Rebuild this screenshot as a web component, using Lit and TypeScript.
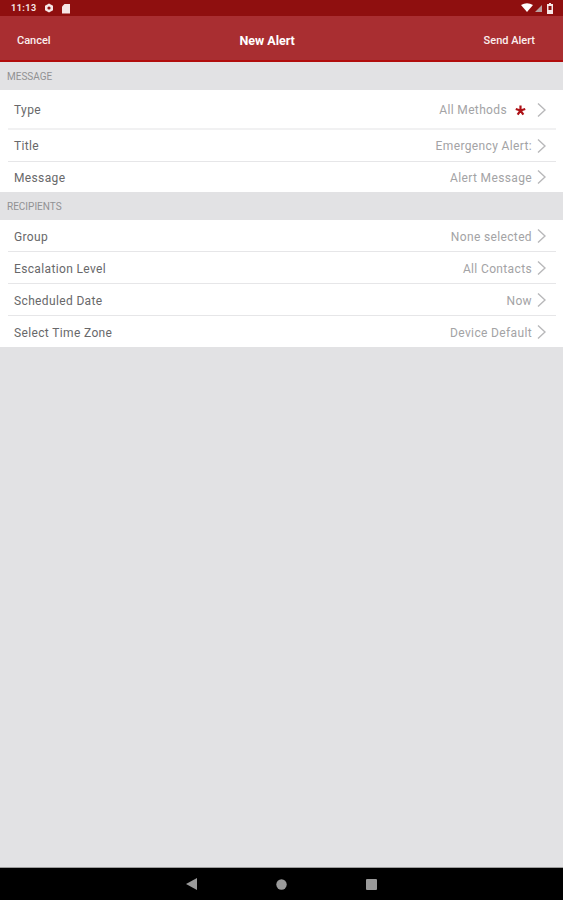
import { LitElement, html, css, svg } from 'lit';
import { customElement } from 'lit/decorators.js';

interface Row {
  label: string;
  value: string;
  required?: boolean;
  tall?: boolean;
}

const messageRows: Row[] = [
  { label: 'Type', value: 'All Methods', required: true, tall: true },
  { label: 'Title', value: 'Emergency Alert:' },
  { label: 'Message', value: 'Alert Message' },
];

const recipientRows: Row[] = [
  { label: 'Group', value: 'None selected' },
  { label: 'Escalation Level', value: 'All Contacts' },
  { label: 'Scheduled Date', value: 'Now' },
  { label: 'Select Time Zone', value: 'Device Default' },
];

const chevron = svg`<path d="M1 .5 L8 7 L1 13.500" fill="none" stroke="#b8b8ba" stroke-width="1.4"/>`;

@customElement('app-root')
export class AppRoot extends LitElement {
  static styles = css`
    :host {
      display: flex;
      flex-direction: column;
      height: 900px;
      background: #e2e2e4;
      font-family: Roboto, "Liberation Sans", sans-serif;
      overflow: hidden;
    }
    .status {
      height: 16px;
      background: #8f0f0f;
      display: flex;
      align-items: center;
      padding: 0 10px 0 11px;
      color: #f4e4e4;
      font-size: 9px;
      font-weight: 700;
      letter-spacing: 0.5px;
    }
    .status svg {
      display: block;
    }
    .status .time {
      margin-right: 7px;
    }
    .status .gap {
      flex: 1;
    }
    .header {
      height: 40px;
      background: #a92e31;
      border-bottom: 2px solid #b10d0d;
      display: flex;
      justify-content: space-between;
      align-items: center;
      padding: 4px 28px 0 17px;
      color: #fbeeee;
      font-size: 11px;
      font-weight: 500;
    }
    .header .title {
      font-size: 12.5px;
      font-weight: 700;
      color: #fff;
    }
    .section {
      height: 28px;
      box-sizing: border-box;
      padding: 9px 0 0 7px;
      font-size: 10px;
      line-height: 11px;
      color: #919193;
    }
    .group {
      background: #fff;
    }
    .row {
      height: 29px;
      margin: 0 7px 0 8px;
      padding: 2px 10px 0 6px;
      display: flex;
      align-items: center;
      border-bottom: 1px solid #e6e6e8;
      font-size: 12px;
      letter-spacing: 0.36px;
      color: #68686a;
    }
    .first .row {
      height: 30px;
      padding-top: 1px;
    }
    .first .row.tall {
      height: 36px;
      padding-top: 2px;
      border-bottom: 2px solid #f1f1f2;
    }
    .row:last-child {
      border-bottom: none;
    }
    .first .row:last-child {
      height: 29px;
    }
    .value {
      margin-left: auto;
      color: #a3a3a5;
    }
    .star {
      margin-left: 8px;
      flex: none;
    }
    .chev {
      margin-left: 5px;
      flex: none;
    }
    .star + .chev {
      margin-left: 11px;
    }
    .nav {
      margin-top: auto;
      height: 33px;
      background: #000;
      border-top: 1px solid #9c9c9c;
      box-sizing: border-box;
      display: flex;
      align-items: center;
      justify-content: center;
      gap: 79px;
    }
    .nav svg {
      display: block;
    }
  `;

  private renderRow(row: Row) {
    return html`
      <div class="row ${row.tall ? 'tall' : ''}">
        <span>${row.label}</span>
        <span class="value">${row.value}</span>
        ${row.required
          ? html`<svg class="star" width="11" height="11" viewBox="0 0 10 10">
              <path d="M5 5V.5M5 5 .7 3.600M5 5 9.300 3.600M5 5 2.400 8.700M5 5 7.600 8.700" stroke="#ad1116" stroke-width="2" fill="none"/>
            </svg>`
          : ''}
        <svg class="chev" width="9" height="15" viewBox="0 0 9 15">${chevron}</svg>
      </div>
    `;
  }

  render() {
    return html`
      <div class="status">
        <span class="time">11:13</span>
        <svg width="10" height="10" viewBox="0 0 10 10">
          <path d="M5 .5 9 2.700v4.600L5 9.500 1 7.300V2.700z" fill="#f6e6e6"/>
          <circle cx="5" cy="5" r="1.600" fill="#8f0f0f"/>
        </svg>
        <svg style="margin-left:7px" width="10" height="11" viewBox="0 0 10 11">
          <path d="M3.500 1H9v9.500H1V3.500z" fill="#f6e6e6"/>
        </svg>
        <span class="gap"></span>
        <svg width="12" height="10" viewBox="0 0 12 10">
          <path d="M0 2Q6-1.500 12 2L6 9z" fill="#fff"/>
        </svg>
        <svg style="margin-left:1px" width="9" height="9" viewBox="0 0 9 9">
          <path d="M8 1V8H1z" fill="#b9a0a0"/>
        </svg>
        <svg style="margin-left:4px" width="6" height="11" viewBox="0 0 6 11">
          <path d="M2 0h2v1h2v10H0V1h2z" fill="#f6e6e6"/>
          <rect x="1.500" y="3" width="3" height="4" fill="#8f0f0f"/>
        </svg>
      </div>
      <div class="header">
        <span>Cancel</span>
        <span class="title">New Alert</span>
        <span>Send Alert</span>
      </div>
      <div class="section">MESSAGE</div>
      <div class="group first">${messageRows.map((r) => this.renderRow(r))}</div>
      <div class="section">RECIPIENTS</div>
      <div class="group">${recipientRows.map((r) => this.renderRow(r))}</div>
      <div class="nav">
        <svg width="11" height="12" viewBox="0 0 11 12"><path d="M11 0V12L0 6z" fill="#9a9a9a"/></svg>
        <svg width="11" height="11" viewBox="0 0 11 11"><circle cx="5.500" cy="5.500" r="5.200" fill="#9a9a9a"/></svg>
        <svg width="11" height="11" viewBox="0 0 11 11"><rect width="11" height="11" rx="1" fill="#9a9a9a"/></svg>
      </div>
    `;
  }
}
